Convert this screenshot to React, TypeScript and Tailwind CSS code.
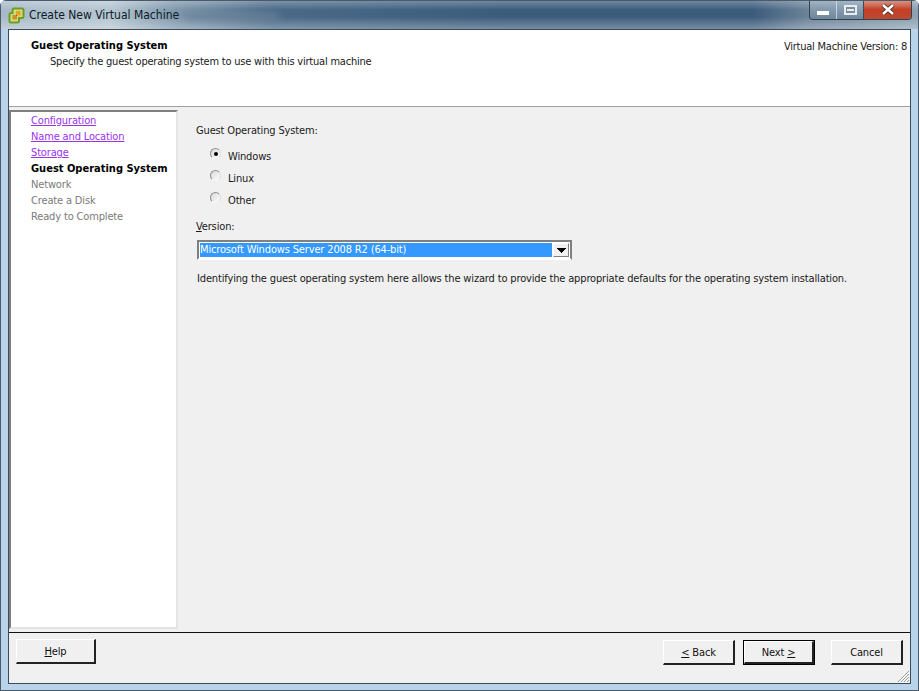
const font = "font-['DejaVu_Sans_Condensed','Liberation_Sans',sans-serif]";

function Radio({ checked }: { checked?: boolean }) {
  return (
    <span className="relative block h-[11px] w-[11px] rounded-full border border-[#8f8f8f] border-r-[#dcdcdc] border-b-[#f4f4f4] bg-gradient-to-br from-[#d8d8d8] to-white">
      {checked && <span className="absolute left-[3px] top-[3px] h-[4px] w-[4px] rounded-full bg-black" />}
    </span>
  );
}

function RadioRow({ label, checked }: { label: string; checked?: boolean }) {
  return (
    <div className="flex h-[22px] items-start">
      <span className="ml-[14px] -mt-px block"><Radio checked={checked} /></span>
      <span className="ml-[7px] leading-[16px]">{label}</span>
    </div>
  );
}

function WinButton({ children, primary, className = "" }: { children: React.ReactNode; primary?: boolean; className?: string }) {
  return (
    <div className={`${primary ? "border border-black" : ""} h-[25px] w-[72px] ${className}`}>
      <div className="flex h-full w-full items-center justify-center border-t border-l border-t-white border-l-white border-r-2 border-b-2 border-r-[#222] border-b-[#222] bg-[#f0f0f0] pt-[2px] text-[#111]">
        <span>{children}</span>
      </div>
    </div>
  );
}

function Logo() {
  return (
    <svg width="17" height="17" viewBox="0 0 17 17" className="block">
      <path d="M6 1.5 H14 Q15.5 1.5 15.5 3 V9.5 Q15.5 11 14 11 H11 V14 Q11 15.5 9.5 15.5 H3 Q1.5 15.5 1.5 14 V7.5 Q1.5 6 3 6 H4.5 V3 Q4.5 1.5 6 1.5 Z" fill="#c8dc8a" stroke="#6f9e1f" strokeWidth="2" />
      <rect x="8" y="4" width="4.5" height="4.5" fill="#f0a020" />
      <rect x="4.5" y="8" width="4.5" height="4.5" fill="#d98a18" />
      <rect x="8" y="8" width="1" height="1" fill="#8a5a10" />
    </svg>
  );
}

export default function App() {
  return (
    <div className={`${font} relative flex h-[691px] w-[919px] flex-col overflow-hidden rounded-t-[6px] bg-[#b9d3ea] text-[11px] leading-[16px] tracking-[-0.15px] text-[#1a1a1a]`}>
      {/* title bar */}
      <div className="relative flex h-[29px] shrink-0 bg-[linear-gradient(90deg,#a8bac9_0%,#b6c6d2_12%,#7f98ad_19%,#4a6a88_30%,#3c5c7c_55%,#3c5c7c_82%,#6d8499_88%,#8ea3b4_100%)]">
        <div className="absolute inset-x-0 top-0 h-[10px] bg-gradient-to-b from-white/30 to-transparent" />
        <div className="absolute bottom-0 inset-x-0 h-[12px] bg-gradient-to-b from-transparent to-white/30" />
        <div className="absolute left-[185px] top-[13px] h-[7px] w-[95px] bg-[#6d8499]/70 blur-[3px]" />
        <div className="relative ml-[8px] mt-[7px]"><Logo /></div>
        <div className="relative ml-[4px] mt-[7px] text-[12px] leading-[16px] tracking-[0px] text-[#0d1a24]">Create New Virtual Machine</div>
        <div className="relative ml-auto mr-[7px] flex h-[20px] overflow-hidden rounded-b-[4px] border border-t-0 border-[#33424f]">
          <div className="flex h-full w-[27px] items-center justify-center border-r border-[#dfe7ee]/70 bg-gradient-to-b from-[#a9bccc]/70 to-[#6d8499]/70">
            <div className="mt-[6px] h-[4px] w-[12px] bg-white" />
          </div>
          <div className="flex h-full w-[27px] items-center justify-center border-r border-[#3a4a58] bg-gradient-to-b from-[#a9bccc]/70 to-[#6d8499]/70">
            <div className="flex h-[10px] w-[13px] items-center justify-center border-2 border-[#e8edf1] bg-[#7c8d9c]">
              <div className="h-[2px] w-[7px] bg-[#e8edf1]" />
            </div>
          </div>
          <div className="flex h-full w-[47px] items-center justify-center bg-gradient-to-b from-[#d89a8a] via-[#c53f25] to-[#bc4a30]">
            <svg width="14" height="11" viewBox="0 0 14 11">
              <path d="M2 1 L12 10 M12 1 L2 10" stroke="#3b2a28" strokeWidth="4.2" />
              <path d="M2 1 L12 10 M12 1 L2 10" stroke="#ffffff" strokeWidth="2.6" />
            </svg>
          </div>
        </div>
      </div>

      {/* client area */}
      <div className="relative mx-[8px] mb-[7px] flex min-h-0 flex-1 flex-col border border-[#3c4b58] bg-[#f0f0f0]">
        <div className="flex h-[77px] shrink-0 justify-between border-b border-b-[#a0a0a0] bg-white pl-[22px] pr-[3px] pt-[9px]">
          <div>
            <div className="font-bold leading-[14px] tracking-normal text-black">Guest Operating System</div>
            <div className="mt-[1px] ml-[19px] leading-[16px] tracking-[-0.21px]">Specify the guest operating system to use with this virtual machine</div>
          </div>
          <div className="leading-[16px] tracking-[-0.23px]">Virtual Machine Version: 8</div>
        </div>

        <div className="flex min-h-0 flex-1 pt-[3px]">
          <div className="mb-[3px] w-[169px] shrink-0 border-2 border-t-[#7f7f7f] border-l-[#7f7f7f] border-r-[#e4e4e4] border-b-[#e4e4e4] bg-white pl-[20px] pt-[1px]">
            <div className="flex flex-col">
              <a className="h-[16px] text-[#9933ee] underline">Configuration</a>
              <a className="h-[16px] text-[#9933ee] underline">Name and Location</a>
              <a className="h-[16px] text-[#9933ee] underline">Storage</a>
              <span className="h-[16px] font-bold tracking-normal text-black">Guest Operating System</span>
              <span className="h-[16px] text-[#7a7a7a]">Network</span>
              <span className="h-[16px] text-[#7a7a7a]">Create a Disk</span>
              <span className="h-[16px] text-[#7a7a7a]">Ready to Complete</span>
            </div>
          </div>
          <div className="min-w-0 flex-1 pl-[18px] pt-[13px]">
            <div className="h-[16px]">Guest Operating System:</div>
            <div className="mt-[10px] flex flex-col">
              <RadioRow label="Windows" checked />
              <RadioRow label="Linux" />
              <RadioRow label="Other" />
            </div>
            <div className="mt-[4px] h-[16px]"><span className="underline">V</span>ersion:</div>
            <div className="ml-[1px] mt-[5px] flex h-[20px] w-[375px] border-2 border-t-[#808080] border-l-[#808080] border-r-[#808080] border-b-white bg-white p-px">
              <div className="flex flex-1 items-center bg-[#3399ff] text-white">Microsoft Windows Server 2008 R2 (64-bit)</div>
              <div className="ml-px flex w-[16px] items-center justify-center border-t border-l border-t-white border-l-white border-r border-b border-r-[#808080] border-b-[#808080] bg-[#f0f0f0]">
                <svg width="9" height="5" viewBox="0 0 9 5"><path d="M0 0H9V1H8V2H7V3H6V4H5V5H4V4H3V3H2V2H1V1H0Z" fill="#000" /></svg>
              </div>
            </div>
            <div className="ml-px mt-[11px] h-[16px] whitespace-nowrap">Identifying the guest operating system here allows the wizard to provide the appropriate defaults for the operating system installation.</div>
          </div>
        </div>

        <div className="flex h-[51px] shrink-0 items-start border-t border-t-[#111] pl-[7px] pr-[7px] pt-[6px]">
          <WinButton className="!w-[80px]"><span className="underline">H</span>elp</WinButton>
          <WinButton className="ml-auto mt-[1px]"><span className="underline">&lt;</span> Back</WinButton>
          <WinButton primary className="ml-[8px] mt-[1px]">Next <span className="underline">&gt;</span></WinButton>
          <WinButton className="ml-[16px] mt-[1px]">Cancel</WinButton>
        </div>
        <svg width="14" height="14" viewBox="0 0 14 14" className="absolute bottom-0 right-0">
          <path d="M13 2 L2 13 M13 5 L5 13 M13 8 L8 13 M13 11 L11 13" stroke="#9a9a9a" strokeWidth="1" />
          <path d="M13 3 L3 13 M13 6 L6 13 M13 9 L9 13" stroke="#ffffff" strokeWidth="1" />
        </svg>
      </div>
      <div className="absolute inset-x-0 bottom-0 h-px bg-[#4a5a68]" />
      <div className="absolute inset-y-0 left-0 w-px bg-[#4a5a68]" />
      <div className="absolute inset-y-0 right-0 w-px bg-[#4a5a68]" />
      <div className="absolute inset-x-0 top-0 h-px bg-[#4a5a68]" />
    </div>
  );
}
